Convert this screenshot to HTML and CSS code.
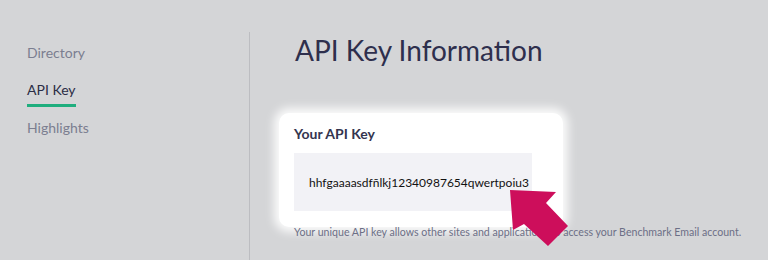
FILE: index.html
```html
<!DOCTYPE html>
<html lang="en">
<head>
    <meta charset="UTF-8">
    <title>API Key Information</title>
    <link rel="stylesheet" href="styles.css">
</head>
<body>

<div class="page">
    <nav class="sidenav">
        <a class="sidenav__item">Directory</a>
        <a class="sidenav__item sidenav__item--active">API Key</a>
        <a class="sidenav__item">Highlights</a>
    </nav>

    <main class="content">
        <h1 class="content__title">API Key Information</h1>

        <div class="apikey">
            <div class="apikey__label">Your API Key</div>
            <div class="apikey__value">hhfgaaaasdfñlkj12340987654qwertpoiu3</div>
        </div>

        <p class="content__note">Your unique API key allows other sites and applications to access your Benchmark Email account.</p>
    </main>
</div>

<svg class="pointer" width="70" height="70" viewBox="0 0 70 70">
    <polygon points="5,5 51,7 41,18 63,41 43,61 19,39 8,45" fill="#cd0e5b"/>
</svg>

</body>
</html>
```

FILE: styles.css
```css
body {
    margin: 0;
    background: #d4d5d7;
    font-family: Lato, "Noto Sans", sans-serif;
    height: 260px;
    overflow: hidden;
}
.page {
    display: flex;
    height: 260px;
}
.sidenav {
    display: flex;
    flex-direction: column;
    align-items: flex-start;
    width: 222px;
    margin-top: 32px;
    padding-left: 27px;
    border-right: 1px solid #bcbdc1;
}
.sidenav__item {
    font-size: 14px;
    line-height: 17px;
    color: #7b7e90;
    margin-top: 12px;
    margin-bottom: 8px;
}
.sidenav__item--active {
    color: #2b2d45;
    margin-bottom: 0;
    padding-bottom: 6px;
    border-bottom: 3px solid #1fae7e;
}
.content {
    padding-left: 29px;
}
.content__title {
    margin: 32px 0 0 16px;
    font-size: 28px;
    font-weight: 400;
    line-height: 36px;
    color: #2e2f4d;
}
.apikey {
    margin-top: 45px;
    width: 254px;
    padding: 12px 15px 16px;
    background: #fff;
    border-radius: 10px;
    box-shadow: 0 0 10px 5px rgba(255, 255, 255, 0.9);
}
.apikey__label {
    font-size: 14px;
    font-weight: 700;
    color: #34354f;
    line-height: 17px;
}
.apikey__value {
    margin-top: 11px;
    width: 238px;
    height: 58px;
    display: flex;
    align-items: center;
    justify-content: center;
    padding-left: 12px;
    box-sizing: border-box;
    background: #f2f2f6;
    font-size: 12px;
    color: #111;
}
.content__note {
    margin: -2px 0 0 15px;
    font-size: 10.6px;
    line-height: 14px;
    color: #6c6f86;
}
.pointer {
    position: absolute;
    left: 505px;
    top: 185px;
}
```
